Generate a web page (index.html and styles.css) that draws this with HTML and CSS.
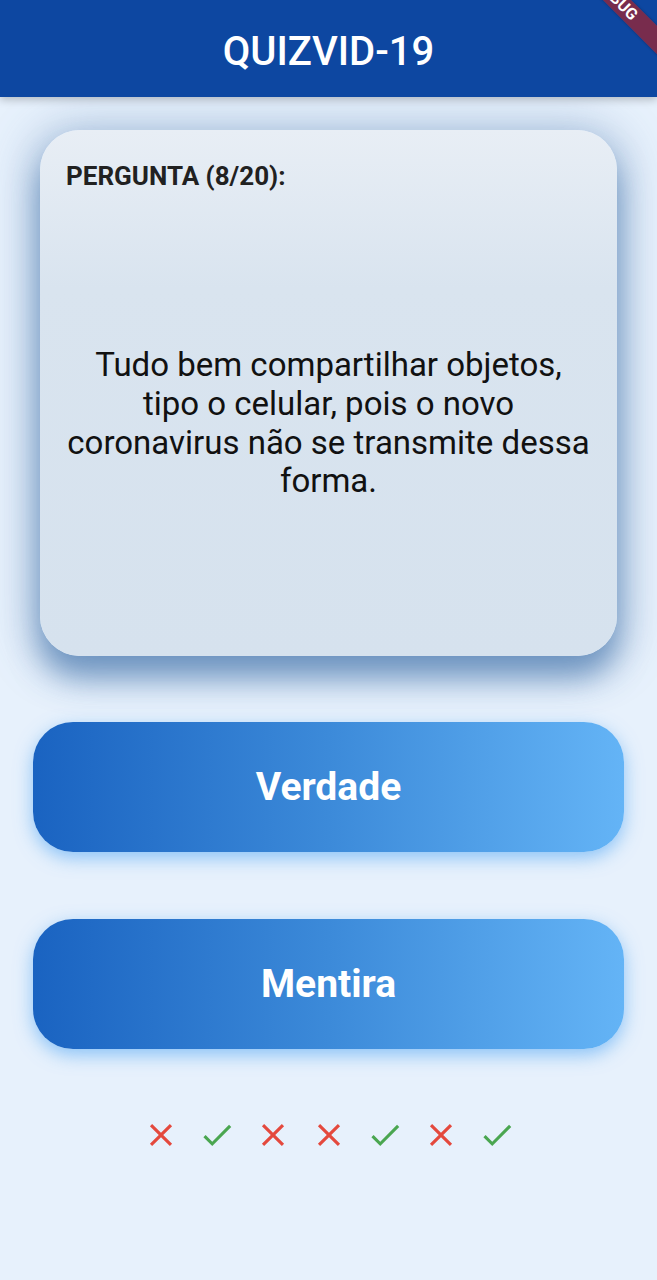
FILE: index.html
```html
<!DOCTYPE html>
<html lang="pt">
<head>
<meta charset="utf-8">
<title>QUIZVID-19</title>
<link rel="stylesheet" href="styles.css">
</head>
<body>
<div class="screen">
  <header class="appbar">
    <h1 class="title">QUIZVID-19</h1>
    <div class="debug"><span>DEBUG</span></div>
  </header>
  <main class="content">
    <section class="card">
      <div class="label">PERGUNTA (8/20):</div>
      <div class="question">
        <p>Tudo bem compartilhar objetos, tipo o celular, pois o novo coronavirus não se transmite dessa forma.</p>
      </div>
    </section>
    <button class="answer">Verdade</button>
    <button class="answer">Mentira</button>
    <div class="score">
      <svg class="ic wrong" viewBox="0 0 24 24"><path d="M19 6.41L17.59 5 12 10.59 6.41 5 5 6.41 10.59 12 5 17.59 6.41 19 12 13.41 17.59 19 19 17.59 13.41 12z"/></svg>
      <svg class="ic right" viewBox="0 0 24 24"><path d="M9 16.2L4.8 12l-1.4 1.4L9 19 21 7l-1.4-1.4L9 16.2z"/></svg>
      <svg class="ic wrong" viewBox="0 0 24 24"><path d="M19 6.41L17.59 5 12 10.59 6.41 5 5 6.41 10.59 12 5 17.59 6.41 19 12 13.41 17.59 19 19 17.59 13.41 12z"/></svg>
      <svg class="ic wrong" viewBox="0 0 24 24"><path d="M19 6.41L17.59 5 12 10.59 6.41 5 5 6.41 10.59 12 5 17.59 6.41 19 12 13.41 17.59 19 19 17.59 13.41 12z"/></svg>
      <svg class="ic right" viewBox="0 0 24 24"><path d="M9 16.2L4.8 12l-1.4 1.4L9 19 21 7l-1.4-1.4L9 16.2z"/></svg>
      <svg class="ic wrong" viewBox="0 0 24 24"><path d="M19 6.41L17.59 5 12 10.59 6.41 5 5 6.41 10.59 12 5 17.59 6.41 19 12 13.41 17.59 19 19 17.59 13.41 12z"/></svg>
      <svg class="ic right" viewBox="0 0 24 24"><path d="M9 16.2L4.8 12l-1.4 1.4L9 19 21 7l-1.4-1.4L9 16.2z"/></svg>
    </div>
  </main>
</div>
</body>
</html>
```
FILE: styles.css
```css
html, body {
  margin: 0;
  padding: 0;
}
body {
  background: #e7f1fc;
  font-family: Roboto, "Noto Sans", "Liberation Sans", sans-serif;
}
.screen {
  width: 657px;
  height: 1280px;
  overflow: hidden;
  position: relative;
  background: #e7f1fc;
}
.appbar {
  position: relative;
  z-index: 2;
  height: 97px;
  background: #0d47a1;
  display: flex;
  align-items: center;
  justify-content: center;
  box-shadow: 0 3px 8px rgba(0, 0, 0, 0.22);
  overflow: hidden;
}
.title {
  margin: 0;
  padding-top: 5px;
  color: #ffffff;
  font-size: 40px;
  font-weight: 500;
}
.debug {
  position: absolute;
  width: 140px;
  height: 20px;
  left: 553px;
  top: -4px;
  transform: rotate(45deg);
  background: rgba(183, 28, 28, 0.63);
  display: flex;
  align-items: center;
  justify-content: center;
  box-shadow: 0 0 3px rgba(0, 0, 0, 0.3);
}
.debug span {
  color: #fff;
  font-size: 16px;
  font-weight: 700;
  line-height: 1;
  margin-right: 18px;
}
.content {
  display: flex;
  flex-direction: column;
  align-items: center;
  padding-top: 33px;
}
.card {
  box-sizing: border-box;
  width: 577px;
  height: 526px;
  border-radius: 40px;
  background: linear-gradient(to bottom, #e8eef5 0%, #d9e4ef 30%, #d6e2ee 100%);
  box-shadow: 0 22px 30px rgba(40, 95, 160, 0.52), 0 4px 45px 8px rgba(70, 115, 170, 0.38);
  display: flex;
  flex-direction: column;
  padding: 31px 26px 0 26px;
}
.label {
  font-size: 26px;
  font-weight: 700;
  color: #212121;
}
.question {
  flex: 1;
  display: flex;
  align-items: center;
  justify-content: center;
}
.question p {
  margin: 0;
  text-align: center;
  font-size: 33px;
  line-height: 38.7px;
  color: #111;
}
.answer {
  box-sizing: border-box;
  width: 591px;
  height: 130px;
  margin-top: 66px;
  border: none;
  border-radius: 40px;
  background: linear-gradient(to right, #1a63c1 0%, #3c8ad9 50%, #64b4f6 100%);
  box-shadow: 0 6px 18px rgba(100, 175, 245, 0.7);
  color: #ffffff;
  font-family: Roboto, "Noto Sans", "Liberation Sans", sans-serif;
  font-size: 39px;
  font-weight: 700;
  padding: 0;
}
.answer + .answer {
  margin-top: 67px;
}
.score {
  display: flex;
  gap: 18px;
  margin-top: 67px;
}
.ic {
  width: 38px;
  height: 38px;
}
.wrong {
  fill: #e4493d;
}
.right {
  fill: #4aa650;
}
```
